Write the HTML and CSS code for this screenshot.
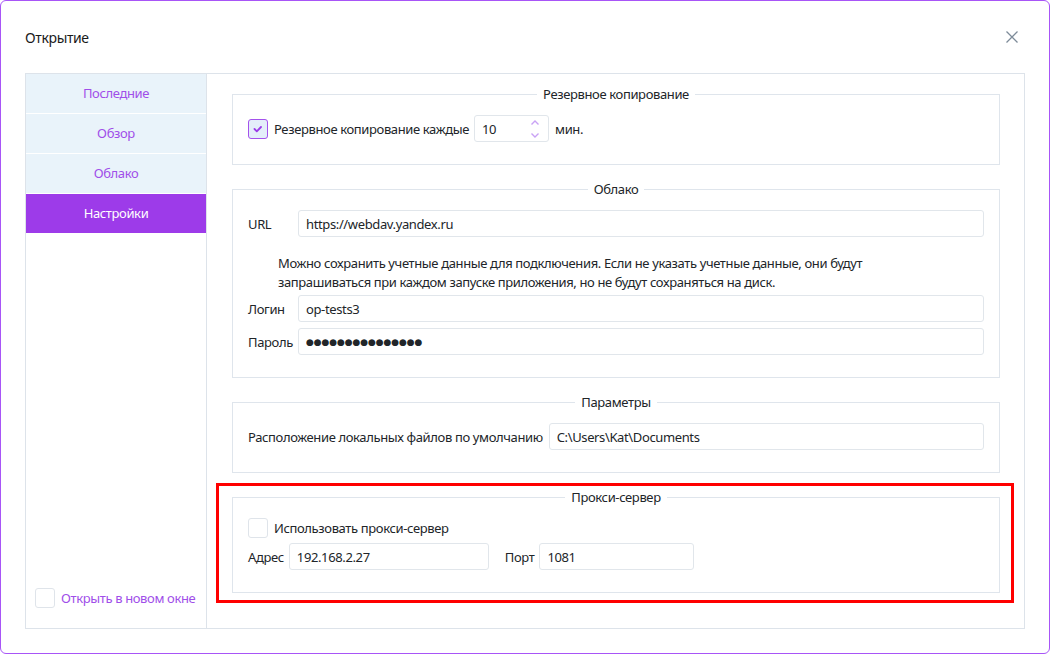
FILE: index.html
```html
<!DOCTYPE html>
<html lang="ru">
<head>
    <meta charset="UTF-8">
    <meta name="viewport" content="width=device-width, initial-scale=1.0">
    <title>Открытие</title>
    <link rel="stylesheet" href="styles.css">
</head>
<body>
    <div class="window">
        <div class="header">
            <span class="title">Открытие</span>
            <button class="close" type="button" aria-label="Закрыть">
                <svg width="12" height="12" viewBox="0 0 12 12">
                    <path d="M0.5 0.5 L11.5 11.5 M11.5 0.5 L0.5 11.5" stroke="#7d8b99" stroke-width="1.3" fill="none"/>
                </svg>
            </button>
        </div>

        <div class="panel">
            <!-- боковое меню -->
            <div class="sidebar">
                <ul class="tabs">
                    <li>Последние</li>
                    <li>Обзор</li>
                    <li>Облако</li>
                    <li class="active">Настройки</li>
                </ul>
                <label class="check sidebar-check">
                    <span class="checkbox"></span>
                    Открыть в новом окне
                </label>
            </div>

            <div class="content">
                <!-- Резервное копирование -->
                <fieldset class="group">
                    <legend>Резервное копирование</legend>
                    <div class="row">
                        <label class="check">
                            <span class="checkbox checked">
                                <svg width="20" height="20" viewBox="0 0 20 20">
                                    <polyline points="6.5,10 8.8,12.3 13,8" stroke="#9b3ae8" stroke-width="1.8" fill="none" stroke-linecap="round" stroke-linejoin="round"/>
                                </svg>
                            </span>
                            Резервное копирование каждые
                        </label>
                        <div class="spin">
                            <input type="text" class="input" value="10">
                            <svg class="spin-arrows" width="10" height="20" viewBox="0 0 10 20">
                                <polyline points="1.5,5.5 5,2 8.5,5.5" stroke="#c9a2f5" stroke-width="1.4" fill="none"/>
                                <polyline points="1.5,14.5 5,18 8.5,14.5" stroke="#c9a2f5" stroke-width="1.4" fill="none"/>
                            </svg>
                        </div>
                        <span>мин.</span>
                    </div>
                </fieldset>

                <!-- Облако -->
                <fieldset class="group">
                    <legend>Облако</legend>
                    <div class="field">
                        <span class="field-label">URL</span>
                        <input type="text" class="input" value="https://webdav.yandex.ru">
                    </div>
                    <p class="hint">Можно сохранить учетные данные для подключения. Если не указать учетные данные, они будут<br>запрашиваться при каждом запуске приложения, но не будут сохраняться на диск.</p>
                    <div class="field">
                        <span class="field-label">Логин</span>
                        <input type="text" class="input" value="op-tests3">
                    </div>
                    <div class="field field-next">
                        <span class="field-label">Пароль</span>
                        <input type="text" class="input password" value="●●●●●●●●●●●●●●●">
                    </div>
                </fieldset>

                <!-- Параметры -->
                <fieldset class="group">
                    <legend>Параметры</legend>
                    <div class="field">
                        <span class="field-label wide">Расположение локальных файлов по умолчанию</span>
                        <input type="text" class="input" value="C:\Users\Kat\Documents">
                    </div>
                </fieldset>

                <!-- Прокси-сервер -->
                <div class="highlight">
                    <fieldset class="group">
                        <legend>Прокси-сервер</legend>
                        <label class="check">
                            <span class="checkbox"></span>
                            Использовать прокси-сервер
                        </label>
                        <div class="field proxy">
                            <span>Адрес</span>
                            <input type="text" class="input address" value="192.168.2.27">
                            <span class="port-label">Порт</span>
                            <input type="text" class="input port" value="1081">
                        </div>
                    </fieldset>
                </div>
            </div>
        </div>
    </div>
</body>
</html>
```

FILE: styles.css
```css
* {
    box-sizing: border-box;
}
html, body {
    margin: 0;
    padding: 0;
}
body {
    font-family: 'Noto Sans', 'Open Sans', sans-serif;
    font-size: 13px;
    letter-spacing: -0.37px;
    color: #212529;
    background-color: #fff;
}
.window {
    width: 1050px;
    height: 654px;
    border: 1px solid #a855f7;
    border-radius: 6px;
    display: flex;
    flex-direction: column;
    background-color: #fff;
}
.header {
    height: 72px;
    padding: 0 24px;
    display: flex;
    align-items: center;
    justify-content: space-between;
}
.title {
    font-size: 14px;
    color: #1a1a1a;
}
.close {
    width: 20px;
    height: 20px;
    margin-right: 3px;
    padding: 0;
    border: none;
    background: none;
    display: flex;
    align-items: center;
    justify-content: center;
    cursor: pointer;
}
.panel {
    margin: 0 24px;
    height: 556px;
    border: 1px solid #dde3ea;
    display: flex;
}
.sidebar {
    width: 181px;
    border-right: 1px solid #dde3ea;
    display: flex;
    flex-direction: column;
    justify-content: space-between;
}
.tabs {
    list-style: none;
    margin: 0;
    padding: 0;
}
.tabs li {
    height: 39px;
    line-height: 39px;
    margin-bottom: 1px;
    text-align: center;
    background-color: #e9f3fa;
    color: #a04ee9;
}
.tabs li.active {
    background-color: #9d3be9;
    color: #fff;
}
.check {
    display: flex;
    align-items: center;
    gap: 6px;
    cursor: pointer;
}
.sidebar-check {
    padding: 0 0 20px 9px;
    color: #a04ee9;
}
.checkbox {
    width: 20px;
    height: 20px;
    border: 1px solid #dfe4ea;
    border-radius: 3px;
    background-color: #fff;
    flex: none;
    position: relative;
}
.checkbox.checked {
    border-color: #a452ec;
    background-color: #e4eefa;
}
.checkbox svg {
    position: absolute;
    top: -1px;
    left: -1px;
}
.content {
    flex: 1;
    padding: 11px 24px 0 25px;
    display: flex;
    flex-direction: column;
    gap: 15px;
}
.group {
    margin: 0;
    padding: 12px 15px 22px;
    border: 1px solid #dfe5ec;
    min-width: 0;
}
.group legend {
    margin: 0 auto;
    padding: 0 6px;
    line-height: 18px;
}
.row {
    display: flex;
    align-items: center;
}
.input {
    height: 27px;
    padding: 0 7px;
    border: 1px solid #e1e6eb;
    border-radius: 3px;
    font-family: inherit;
    font-size: 13px;
    letter-spacing: inherit;
    color: #212529;
    background-color: #fff;
    outline: none;
}
.spin {
    position: relative;
    margin: 0 6px 0 5px;
}
.spin .input {
    width: 75px;
}
.spin-arrows {
    position: absolute;
    right: 9px;
    top: 4px;
}
.field {
    display: flex;
    align-items: center;
}
.field .input {
    flex: 1;
}
.field-label {
    width: 50px;
    flex: none;
}
.field-label.wide {
    width: auto;
    margin-right: 6px;
}
.field-next {
    margin-top: 6px;
}
.hint {
    margin: 17px 0 3px 30px;
    line-height: 19px;
}
.password {
    font-family: 'DejaVu Sans', sans-serif;
    font-size: 9px;
    letter-spacing: -0.1px;
}
.highlight {
    position: relative;
}
.highlight::after {
    content: "";
    position: absolute;
    top: -5px;
    left: -16px;
    right: -14px;
    bottom: -10px;
    border: 3px solid #f00;
    pointer-events: none;
}
.proxy {
    margin-top: 5px;
}
.proxy .input {
    flex: none;
    margin-left: 5px;
}
.address {
    width: 200px;
}
.port-label {
    margin-left: 16px;
}
.port {
    width: 155px;
}
```
